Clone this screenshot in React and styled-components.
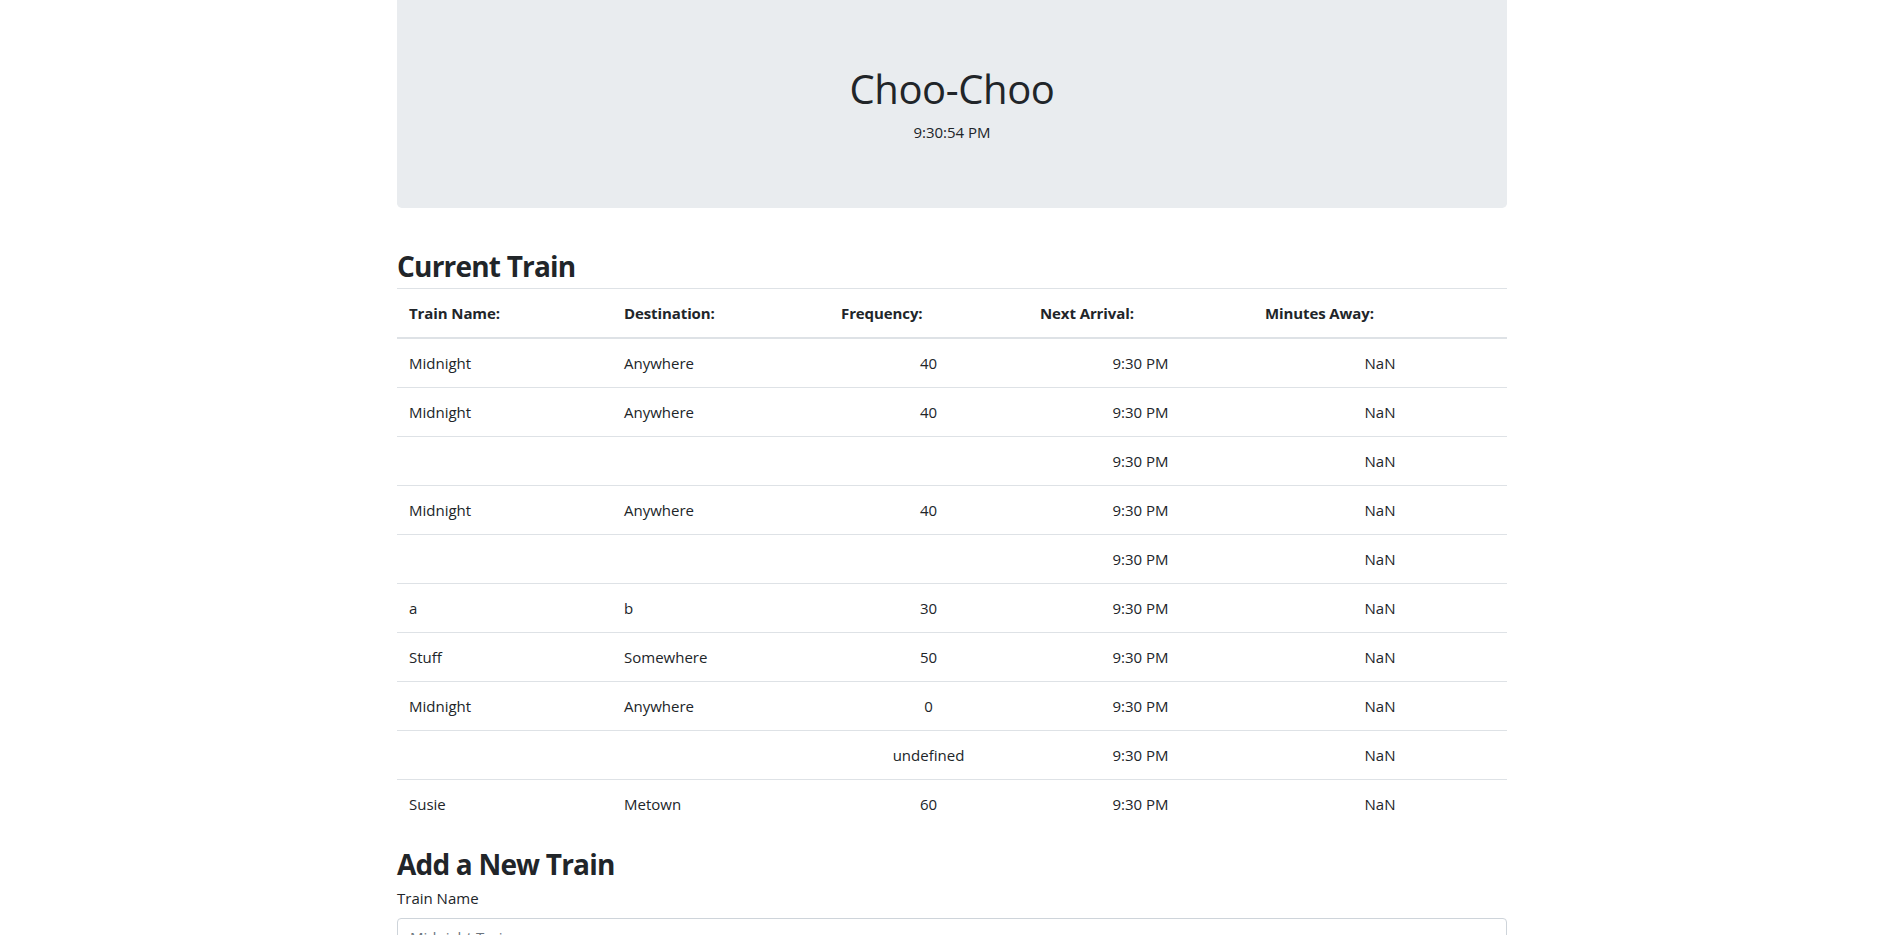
import React from 'react';
import styled, { createGlobalStyle } from 'styled-components';

const GlobalStyle = createGlobalStyle`
  * {
    box-sizing: border-box;
  }
  body {
    margin: 0;
    font-family: "Open Sans", "Noto Sans", "Liberation Sans", sans-serif;
    font-size: 16px;
    line-height: 1.5;
    color: #212529;
    background-color: #fff;
  }
`;

const Page = styled.div`
  padding-left: 7px;
`;

const Container = styled.div`
  width: 100%;
  max-width: 1110px;
  margin: 0 auto;
`;

const Jumbotron = styled.div`
  background-color: #e9ecef;
  border-radius: 0 0 4.8px 4.8px;
  padding: 64px 32px;
  margin-bottom: 38px;
  text-align: center;
`;

const Title = styled.h1`
  margin: 0 0 8px;
  padding-top: 1px;
  font-size: 40px;
  font-weight: 500;
  line-height: 47px;
  letter-spacing: -0.4px;
`;

const Clock = styled.div`
  font-size: 15px;
  line-height: 24px;
`;

const SectionTitle = styled.h3`
  margin: 0 0 5px;
  padding-top: 3px;
  font-size: 28px;
  font-weight: 700;
  line-height: 34px;
  letter-spacing: -0.8px;
`;

const Table = styled.table`
  width: 100%;
  margin-bottom: 16px;
  border-collapse: collapse;
  table-layout: fixed;
  color: #212529;
`;

const HeadCell = styled.th`
  padding: 12px;
  text-align: left;
  font-size: 15px;
  font-weight: 700;
  line-height: 24px;
  letter-spacing: -0.1px;
  border-top: 1px solid #dee2e6;
  border-bottom: 2px solid #dee2e6;
`;

const Row = styled.tr`
  & + & td {
    border-top: 1px solid #dee2e6;
  }
`;

const Cell = styled.td`
  padding: 12px;
  text-align: ${(props) => (props.center ? 'center' : 'left')};
  font-size: 15px;
  line-height: 24px;
  height: 48px;
  vertical-align: top;
`;

const FormGroup = styled.div`
  margin-bottom: 16px;
`;

const Label = styled.label`
  display: inline-block;
  margin-bottom: 8px;
  font-size: 15px;
  line-height: 24px;
`;

const Input = styled.input`
  display: block;
  width: 100%;
  height: 38px;
  padding: 6px 12px;
  font-family: inherit;
  font-size: 15px;
  line-height: 24px;
  color: #495057;
  background-color: #fff;
  border: 1px solid #ced4da;
  border-radius: 4px;
  &::placeholder {
    color: #6c757d;
  }
`;

const SubmitButton = styled.button`
  padding: 6px 12px;
  font-family: inherit;
  font-size: 16px;
  line-height: 24px;
  color: #fff;
  background-color: #007bff;
  border: 1px solid #007bff;
  border-radius: 4px;
  margin-bottom: 32px;
`;

const trains = [
  { name: 'Midnight', dest: 'Anywhere', freq: '40' },
  { name: 'Midnight', dest: 'Anywhere', freq: '40' },
  { name: '', dest: '', freq: '' },
  { name: 'Midnight', dest: 'Anywhere', freq: '40' },
  { name: '', dest: '', freq: '' },
  { name: 'a', dest: 'b', freq: '30' },
  { name: 'Stuff', dest: 'Somewhere', freq: '50' },
  { name: 'Midnight', dest: 'Anywhere', freq: '0' },
  { name: '', dest: '', freq: 'undefined' },
  { name: 'Susie', dest: 'Metown', freq: '60' },
];

const columns = [
  { label: 'Train Name:', width: 215 },
  { label: 'Destination:', width: 217 },
  { label: 'Frequency:', width: 199 },
  { label: 'Next Arrival:', width: 225 },
  { label: 'Minutes Away:', width: 254 },
];

const fields = [
  { label: 'Train Name', placeholder: 'Midnight Train' },
  { label: 'Destination', placeholder: 'Anywhere' },
  { label: 'First Train Time (HH:mm - military time)', placeholder: '05:35' },
  { label: 'Frequency (min)', placeholder: '40' },
];

const App = () => {
  return (
    <Page>
      <GlobalStyle />
      <Container>
        <Jumbotron>
          <Title>Choo-Choo</Title>
          <Clock>9:30:54 PM</Clock>
        </Jumbotron>

        <SectionTitle>Current Train</SectionTitle>
        <Table>
          <colgroup>
            {columns.map((col) => (
              <col key={col.label} style={{ width: col.width }} />
            ))}
          </colgroup>
          <thead>
            <tr>
              {columns.map((col) => (
                <HeadCell key={col.label}>{col.label}</HeadCell>
              ))}
            </tr>
          </thead>
          <tbody>
            {trains.map((train, i) => (
              <Row key={i}>
                <Cell>{train.name}</Cell>
                <Cell>{train.dest}</Cell>
                <Cell center>{train.freq}</Cell>
                <Cell center>9:30 PM</Cell>
                <Cell center>NaN</Cell>
              </Row>
            ))}
          </tbody>
        </Table>

        <SectionTitle>Add a New Train</SectionTitle>
        <form onSubmit={(e) => e.preventDefault()}>
          {fields.map((field) => (
            <FormGroup key={field.label}>
              <Label>{field.label}</Label>
              <Input type="text" placeholder={field.placeholder} />
            </FormGroup>
          ))}
          <SubmitButton type="submit">Submit</SubmitButton>
        </form>
      </Container>
    </Page>
  );
};

export default App;
